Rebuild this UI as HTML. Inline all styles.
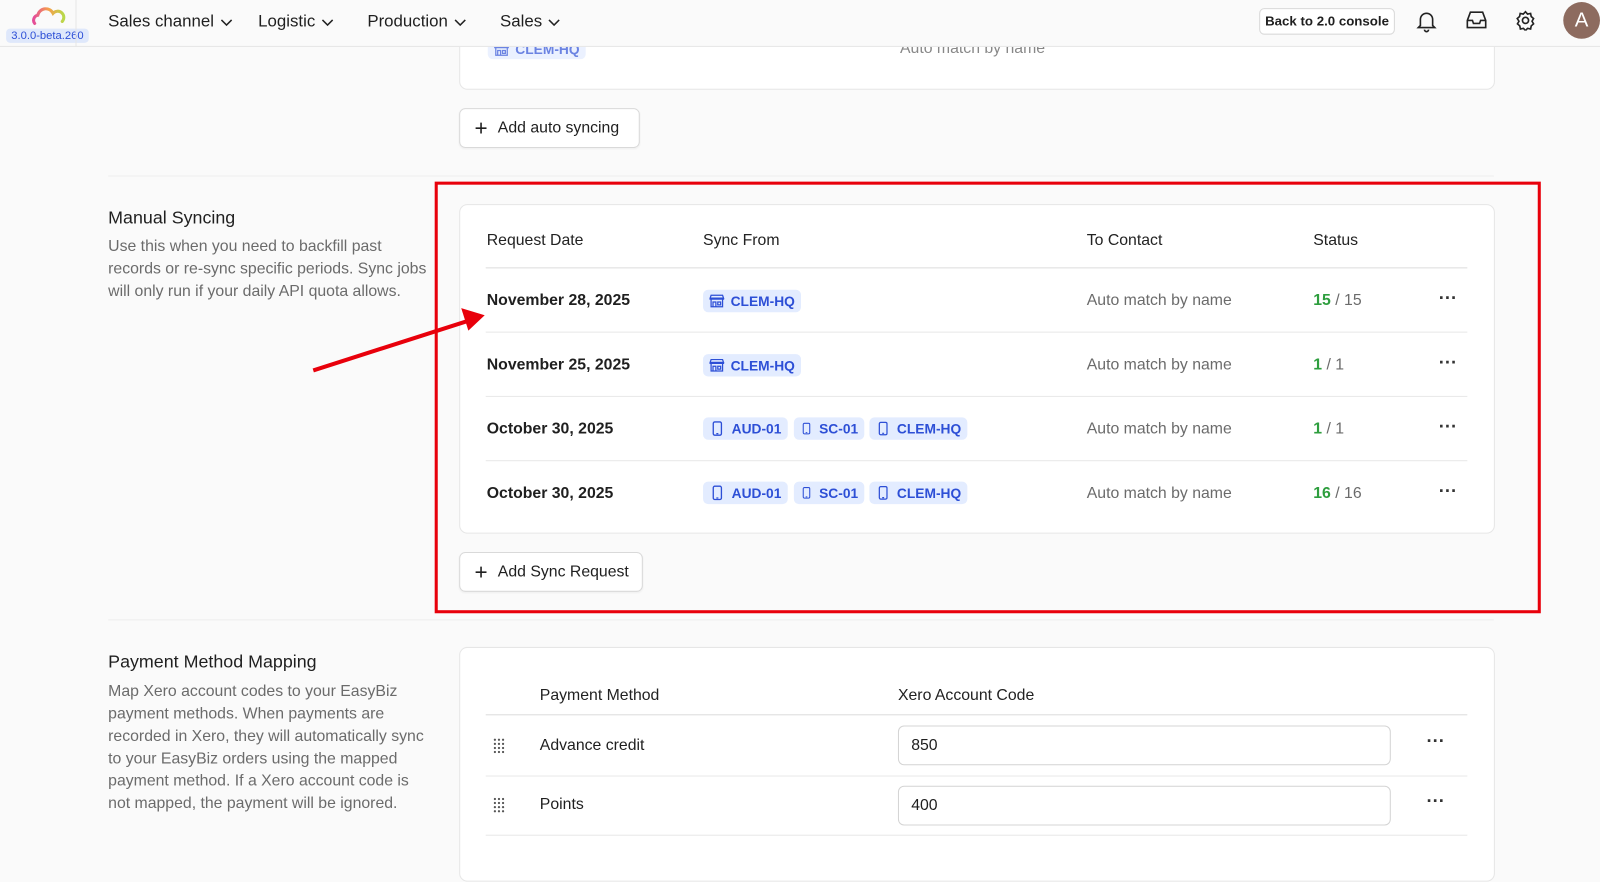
<!DOCTYPE html>
<html><head><meta charset="utf-8"><style>
*{box-sizing:border-box;margin:0;padding:0}
html,body{width:1600px;height:841px;overflow:hidden;background:#fafafa}
#w{position:absolute;left:0;top:0;width:1568px;height:824px;transform:scale(1.0204);transform-origin:0 0;font-family:"Liberation Sans",sans-serif;color:#1f1f1f;font-size:15px}
.a{position:absolute;white-space:nowrap}
.card{position:absolute;background:#fff;border:1px solid #e6e6e6;border-radius:8px}
.hl{position:absolute;height:1px;background:#e8e8e8}
.btn{position:absolute;background:#fff;border:1px solid #d9d9d9;border-radius:6px;font-size:15.5px;display:flex;align-items:center;padding-left:14px;gap:10px;box-shadow:0 1px 2px rgba(0,0,0,.05)}
.tag{position:absolute;background:#e3ecff;color:#2d4fd6;border-radius:5px;height:22px;font-size:13.5px;font-weight:bold;display:flex;align-items:center;padding:0 6px;gap:6px;white-space:nowrap;overflow:hidden}
.muted{color:#6b6b6b}
.dots{position:absolute;font-size:18px;font-weight:bold;color:#333}
.g{color:#2e9e3e;font-weight:bold}
.hd{font-size:15.5px;color:#222}
.v{font-size:15.5px}
.chev{display:inline-block;vertical-align:middle;margin-left:6px}
</style></head><body><div id="w">
<svg width="0" height="0" style="position:absolute"><defs>
<symbol id="st" viewBox="0 0 16 16"><g fill="none" stroke="#2d4fd6" stroke-width="1.3"><path d="M2 2h12l1 3H1z"/><path d="M2 5v9h12V5"/><path d="M4 14V9h3v5M9 9h3v3H9z"/><path d="M1 5v1h14V5"/></g></symbol>
<symbol id="ph" viewBox="0 0 16 16"><rect x="4" y="1.5" width="8" height="13" rx="1.5" fill="none" stroke="#2d4fd6" stroke-width="1.3"/><path d="M7 13h2" stroke="#2d4fd6" stroke-width="1.2"/></symbol>
<symbol id="cv" viewBox="0 0 12 8"><path d="M1 1.5l5 5 5-5" fill="none" stroke="#222" stroke-width="1.5"/></symbol>
<symbol id="dr" viewBox="0 0 12 16"><g fill="#555"><circle cx="2" cy="2" r="1.1"/><circle cx="6" cy="2" r="1.1"/><circle cx="10" cy="2" r="1.1"/><circle cx="2" cy="6" r="1.1"/><circle cx="6" cy="6" r="1.1"/><circle cx="10" cy="6" r="1.1"/><circle cx="2" cy="10" r="1.1"/><circle cx="6" cy="10" r="1.1"/><circle cx="10" cy="10" r="1.1"/><circle cx="2" cy="14" r="1.1"/><circle cx="6" cy="14" r="1.1"/><circle cx="10" cy="14" r="1.1"/></g></symbol>
</defs></svg>
<!-- header -->
<div class="a" style="left:0;top:0;width:1568px;height:46px;background:#fafafa;border-bottom:1px solid #e6e6e6;z-index:5">
<svg class="a" style="left:30px;top:7px" width="36" height="22" viewBox="0 0 36 22"><path d="M4 16a5 5 0 0 1 3-8 8 8 0 0 1 15-2 6 6 0 0 1 9 8" fill="none" stroke="url(#lg)" stroke-width="3" stroke-linecap="round"/><defs><linearGradient id="lg" x1="0" x2="1"><stop offset="0" stop-color="#e44c9a"/><stop offset=".5" stop-color="#f5a04a"/><stop offset="1" stop-color="#b8d94a"/></linearGradient></defs></svg>
<div class="a" style="left:6px;top:28px;background:#dfe8fb;color:#2d4fd6;font-size:11px;padding:1px 5px;border-radius:4px">3.0.0-beta.260</div>
<div class="a" style="left:74px;top:0;width:1px;height:46px;background:#e6e6e6"></div>
<div class="a" style="left:106px;top:12px;font-size:16.5px">Sales channel<svg class="chev" width="12" height="8"><use href="#cv"/></svg></div>
<div class="a" style="left:253px;top:12px;font-size:16.5px">Logistic<svg class="chev" width="12" height="8"><use href="#cv"/></svg></div>
<div class="a" style="left:360px;top:12px;font-size:16.5px">Production<svg class="chev" width="12" height="8"><use href="#cv"/></svg></div>
<div class="a" style="left:490px;top:12px;font-size:16.5px">Sales<svg class="chev" width="12" height="8"><use href="#cv"/></svg></div>
<div class="a" style="left:1234px;top:8px;width:133px;height:26px;border:1px solid #d9d9d9;border-radius:5px;background:#fff;font-size:13px;font-weight:bold;text-align:center;line-height:24px">Back to 2.0 console</div>
<svg class="a" style="left:1388px;top:10px" width="20" height="22" viewBox="0 0 20 22" fill="none" stroke="#222" stroke-width="1.6"><path d="M4 15V9a6 6 0 0 1 12 0v6l2 2H2z"/><path d="M8 19a2 2 0 0 0 4 0"/></svg>
<svg class="a" style="left:1436px;top:10px" width="22" height="20" viewBox="0 0 22 20" fill="none" stroke="#222" stroke-width="1.6"><path d="M2 10l3-8h12l3 8v7H2z"/><path d="M2 10h5l1 3h6l1-3h5"/></svg>
<svg class="a" style="left:1485px;top:10px" width="20" height="20" viewBox="0 0 20 20" fill="none" stroke="#222" stroke-width="1.6"><circle cx="10" cy="10" r="3"/><path d="M10 1.5l2 2.3 3-.6.6 3 2.3 2-1.5 2.6 1.5 2.6-2.3 2-.6 3-3-.6-2 2.3-2-2.3-3 .6-.6-3-2.3-2 1.5-2.6L1.9 8.2l2.3-2 .6-3 3 .6z"/></svg>
<div class="a" style="left:1532px;top:2px;width:36px;height:36px;border-radius:50%;background:#8d6b5f;color:#fff;font-size:20px;text-align:center;line-height:36px">A</div>
</div>
<!-- top card -->
<div class="card" style="left:450px;top:20px;width:1015px;height:68px"></div>
<div class="tag" style="left:478px;top:38px;height:20px;opacity:.7"><svg width="15" height="15"><use href="#st"/></svg>CLEM-HQ</div>
<div class="a muted v" style="left:882px;top:39px;opacity:.8">Auto match by name</div>
<div class="dots" style="left:1410px;top:34px">···</div>
<div class="btn" style="left:450px;top:106px;width:177px;height:39px"><span style="font-size:22px;font-weight:300">+</span>Add auto syncing</div>
<div class="hl" style="left:106px;top:172px;width:1358px;background:#eee"></div>
<!-- manual -->
<div class="a" style="left:106px;top:203px;font-size:17.5px">Manual Syncing</div>
<div class="a muted" style="left:106px;top:231px;font-size:15.5px;line-height:22px">Use this when you need to backfill past<br>records or re-sync specific periods. Sync jobs<br>will only run if your daily API quota allows.</div>
<div class="card" style="left:450px;top:200px;width:1015px;height:323px"></div>
<div class="a hd" style="left:477px;top:227px">Request Date</div>
<div class="a hd" style="left:689px;top:227px">Sync From</div>
<div class="a hd" style="left:1065px;top:227px">To Contact</div>
<div class="a hd" style="left:1287px;top:227px">Status</div>
<div class="hl" style="left:476px;top:262px;width:962px;background:#ddd"></div>
<div class="hl" style="left:476px;top:325px;width:962px"></div>
<div class="hl" style="left:476px;top:388px;width:962px"></div>
<div class="hl" style="left:476px;top:451px;width:962px"></div>

<div class="a v" style="left:477px;top:286px;font-weight:bold">November 28, 2025</div>
<div class="tag" style="left:689px;top:284px;width:96px"><svg width="16" height="16"><use href="#st"/></svg>CLEM-HQ</div>
<div class="a muted v" style="left:1065px;top:286px">Auto match by name</div>
<div class="a muted v" style="left:1287px;top:286px"><span class="g">15</span> / 15</div>
<div class="dots" style="left:1410px;top:282px">···</div>

<div class="a v" style="left:477px;top:349px;font-weight:bold">November 25, 2025</div>
<div class="tag" style="left:689px;top:347px;width:96px"><svg width="16" height="16"><use href="#st"/></svg>CLEM-HQ</div>
<div class="a muted v" style="left:1065px;top:349px">Auto match by name</div>
<div class="a muted v" style="left:1287px;top:349px"><span class="g">1</span> / 1</div>
<div class="dots" style="left:1410px;top:345px">···</div>

<div class="a v" style="left:477px;top:412px;font-weight:bold">October 30, 2025</div>
<div class="tag" style="left:689px;top:409px;width:83px"><svg width="16" height="16"><use href="#ph"/></svg>AUD-01</div>
<div class="tag" style="left:778px;top:409px;width:69px"><svg width="16" height="16"><use href="#ph"/></svg>SC-01</div>
<div class="tag" style="left:852px;top:409px;width:96px"><svg width="16" height="16"><use href="#ph"/></svg>CLEM-HQ</div>
<div class="a muted v" style="left:1065px;top:412px">Auto match by name</div>
<div class="a muted v" style="left:1287px;top:412px"><span class="g">1</span> / 1</div>
<div class="dots" style="left:1410px;top:408px">···</div>

<div class="a v" style="left:477px;top:475px;font-weight:bold">October 30, 2025</div>
<div class="tag" style="left:689px;top:472px;width:83px"><svg width="16" height="16"><use href="#ph"/></svg>AUD-01</div>
<div class="tag" style="left:778px;top:472px;width:69px"><svg width="16" height="16"><use href="#ph"/></svg>SC-01</div>
<div class="tag" style="left:852px;top:472px;width:96px"><svg width="16" height="16"><use href="#ph"/></svg>CLEM-HQ</div>
<div class="a muted v" style="left:1065px;top:475px">Auto match by name</div>
<div class="a muted v" style="left:1287px;top:475px"><span class="g">16</span> / 16</div>
<div class="dots" style="left:1410px;top:471px">···</div>

<div class="btn" style="left:450px;top:541px;width:180px;height:39px"><span style="font-size:22px;font-weight:300">+</span>Add Sync Request</div>
<div class="a" style="left:426px;top:178px;width:1084px;height:423px;border:3px solid #e8000b"></div>
<svg class="a" style="left:0;top:0" width="1568" height="824"><line x1="307" y1="363" x2="460" y2="314" stroke="#e8000b" stroke-width="4"/><polygon points="475,309 452,302 459,324" fill="#e8000b"/></svg>
<div class="hl" style="left:106px;top:607px;width:1358px;background:#eee"></div>
<!-- payment -->
<div class="a" style="left:106px;top:638px;font-size:17.5px">Payment Method Mapping</div>
<div class="a muted" style="left:106px;top:667px;font-size:15.5px;line-height:22px">Map Xero account codes to your EasyBiz<br>payment methods. When payments are<br>recorded in Xero, they will automatically sync<br>to your EasyBiz orders using the mapped<br>payment method. If a Xero account code is<br>not mapped, the payment will be ignored.</div>
<div class="card" style="left:450px;top:634px;width:1015px;height:230px"></div>
<div class="a hd" style="left:529px;top:673px">Payment Method</div>
<div class="a hd" style="left:880px;top:673px">Xero Account Code</div>
<div class="hl" style="left:476px;top:700px;width:962px;background:#ddd"></div>
<svg class="a" style="left:483px;top:723px" width="12" height="16"><use href="#dr"/></svg>
<div class="a v" style="left:529px;top:722px">Advance credit</div>
<div class="a v" style="left:880px;top:711px;width:483px;height:39px;border:1px solid #d4d4d4;border-radius:6px;padding:10px 12px;background:#fff">850</div>
<div class="dots" style="left:1398px;top:716px">···</div>
<div class="hl" style="left:476px;top:760px;width:962px"></div>
<svg class="a" style="left:483px;top:781px" width="12" height="16"><use href="#dr"/></svg>
<div class="a v" style="left:529px;top:780px">Points</div>
<div class="a v" style="left:880px;top:770px;width:483px;height:39px;border:1px solid #d4d4d4;border-radius:6px;padding:10px 12px;background:#fff">400</div>
<div class="dots" style="left:1398px;top:775px">···</div>
<div class="hl" style="left:476px;top:818px;width:962px"></div>
</div></body></html>
